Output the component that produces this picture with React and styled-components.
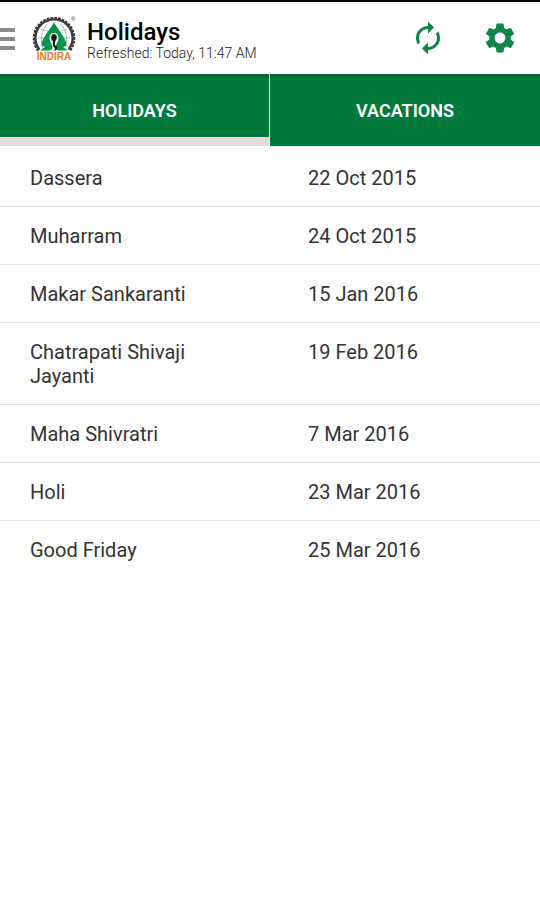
import React, { useState } from 'react';
import styled, { createGlobalStyle } from 'styled-components';
import { MdAutorenew, MdSettings } from 'react-icons/md';

const GlobalStyle = createGlobalStyle`
  * {
    box-sizing: border-box;
  }

  body {
    margin: 0;
    background-color: #fefefe;
    color: #333;
    font-family: Roboto, 'Liberation Sans', sans-serif;
  }
`;

const Wrap = styled.div`
  width: 100%;
  border-top: 2px solid #000;
`;

const Header = styled.header`
  display: flex;
  align-items: center;
  height: 72px;
  padding-right: 4px;
  background-color: #fff;
`;

const MenuBtn = styled.button`
  display: flex;
  flex-direction: column;
  gap: 5px;
  width: 32px;
  padding: 2px 0 0;
  border: none;
  background: none;
  cursor: pointer;
`;

const MenuLine = styled.span`
  width: 15px;
  height: 4px;
  background-color: #8b898c;
`;

const TitleBox = styled.div`
  flex: 1;
  padding-top: 4px;
  margin-left: 11px;
`;

const Title = styled.h1`
  margin: 0;
  color: #000;
  font-size: 24px;
  font-weight: 500;
  line-height: 26px;
`;

const Refreshed = styled.p`
  margin: 0;
  color: #222;
  font-size: 14px;
  font-weight: 300;
  line-height: 16px;
`;

const IconBtn = styled.button`
  display: flex;
  justify-content: center;
  align-items: center;
  width: 72px;
  height: 72px;
  padding: 0;
  border: none;
  background: none;
  color: #118548;
  font-size: 36px;
  cursor: pointer;
`;

const Tabs = styled.div`
  display: flex;
  height: 72px;
  background-color: #007a3d;
  box-shadow: inset 0 4px 3px -2px rgba(0, 0, 0, 0.25);
`;

const TabItem = styled.div`
  display: flex;
  width: 50%;

  &:not(:last-child) {
    border-right: 1px solid #fff;
  }
`;

const Tab = styled.button`
  flex: 1;
  padding: 2px 0 0;
  border: none;
  background: none;
  box-shadow: inset 0 -9px 0 ${({ $active }) => ($active ? '#e0dcdb' : 'transparent')};
  color: #fff;
  font-family: inherit;
  font-size: 18px;
  font-weight: 600;
  line-height: 24px;
  cursor: pointer;
`;

const HolidayTable = styled.table`
  width: 100%;
  margin-top: 3px;
  border-collapse: separate;
  border-spacing: 0;
  table-layout: fixed;
  font-size: 20px;
  line-height: 24px;
`;

const Row = styled.tr`
  &:not(:last-child) td {
    border-bottom: 1px solid #e2e2e2;
  }
`;

const NameCell = styled.td`
  padding: 17px 30px 16px;
  vertical-align: top;
`;

const DateCell = styled.td`
  padding: 17px 16px 16px 38px;
  vertical-align: top;
`;

const holidays = [
  { name: 'Dassera', date: '22 Oct 2015' },
  { name: 'Muharram', date: '24 Oct 2015' },
  { name: 'Makar Sankaranti', date: '15 Jan 2016' },
  { name: 'Chatrapati Shivaji Jayanti', date: '19 Feb 2016' },
  { name: 'Maha Shivratri', date: '7 Mar 2016' },
  { name: 'Holi', date: '23 Mar 2016' },
  { name: 'Good Friday', date: '25 Mar 2016' }
];

const Logo = () => (
  <svg width="44" height="46" viewBox="0 0 44 46" role="img" aria-label="Indira">
    {/* gear ring, open at the bottom */}
    <path d="M6.500 35.500A19.800 19.800 0 1 1 37.500 35.500" fill="none" stroke="#333" strokeWidth="3" strokeDasharray="2.600 1.100" />
    <path d="M7.400 34.500A18.600 18.600 0 1 1 36.600 34.500" fill="none" stroke="#3d3d3d" strokeWidth="2.400" />
    {/* globe lines */}
    <path
      d="M6 23h32M9 14q13 6 26 0M8 31q14-6 28 0M15 9Q6 20 11 34M29 9q9 11 4 25"
      fill="none"
      stroke="#999"
      strokeWidth="0.700"
    />
    <path d="M22 7C24 12 31 19 34 27c1 3 0 4-3 5l5 3.500H8L13 32c-3-1-4-2-3-5C13 19 20 12 22 7z" fill="#07934a" />
    <path d="M22 18c-3 0-4.500 2-4.500 5 0 4 3 6 3 9 0 2-1 3-3 4h9c-2-1-3-2-3-4 0-3 3-5 3-9 0-3-1.500-5-4.500-5z" fill="#fff" />
    <ellipse cx="22" cy="22.500" rx="2.800" ry="3.500" fill="#181818" />
    <path d="M20.800 25h2.600l-.5 4c0 2 2.500 2 2.300 4.200-.2 1.800-2 2.600-4 2.300 2-.8 2.200-1.900 1-3.200-1.600-1.600-1.400-3.300-1.400-7.300z" fill="#181818" />
    <text x="22" y="45" textAnchor="middle" fontSize="10" fontWeight="700" fontFamily="Liberation Sans, sans-serif" fill="#ec7a2b">
      INDIRA
    </text>
    <text x="39" y="6" fontSize="6" fontFamily="Liberation Sans, sans-serif" fill="#333">
      ®
    </text>
  </svg>
);

const App = () => {
  const [tab, setTab] = useState('holidays');

  return (
    <Wrap>
      <GlobalStyle />
      <Header>
        <MenuBtn aria-label="Menu">
          <MenuLine />
          <MenuLine />
          <MenuLine />
        </MenuBtn>
        <Logo />
        <TitleBox>
          <Title>Holidays</Title>
          <Refreshed>Refreshed: Today, 11:47 AM</Refreshed>
        </TitleBox>
        <IconBtn aria-label="Refresh">
          <MdAutorenew />
        </IconBtn>
        <IconBtn aria-label="Settings">
          <MdSettings />
        </IconBtn>
      </Header>

      <Tabs role="tablist">
        <TabItem role="presentation">
          <Tab role="tab" aria-selected={tab === 'holidays'} $active={tab === 'holidays'} onClick={() => setTab('holidays')}>
            HOLIDAYS
          </Tab>
        </TabItem>
        <TabItem role="presentation">
          <Tab role="tab" aria-selected={tab === 'vacations'} $active={tab === 'vacations'} onClick={() => setTab('vacations')}>
            VACATIONS
          </Tab>
        </TabItem>
      </Tabs>

      {tab === 'holidays' && (
        <HolidayTable>
          <tbody>
            {holidays.map((item) => (
              <Row key={item.name}>
                <NameCell>{item.name}</NameCell>
                <DateCell>{item.date}</DateCell>
              </Row>
            ))}
          </tbody>
        </HolidayTable>
      )}
    </Wrap>
  );
};

export default App;
